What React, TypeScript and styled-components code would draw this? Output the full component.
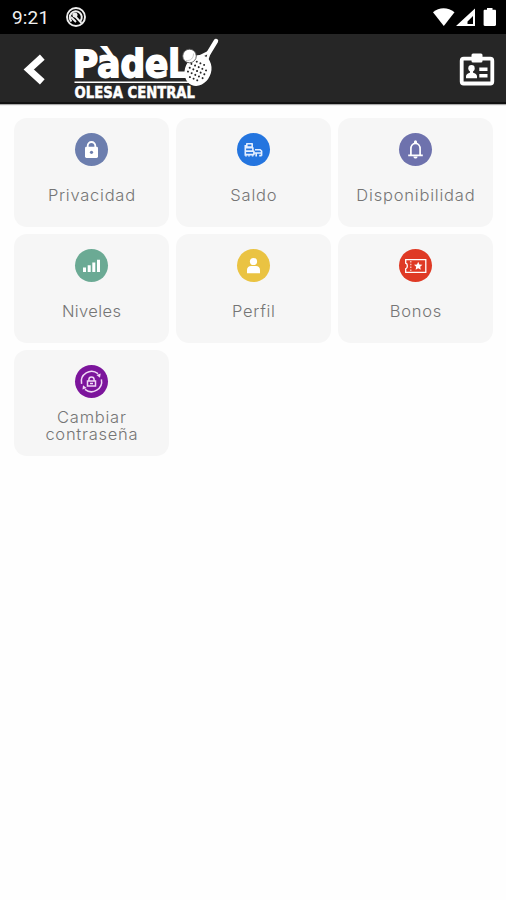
import React from 'react';
import styled, { createGlobalStyle } from 'styled-components';

const GlobalStyle = createGlobalStyle`
  * { box-sizing: border-box; }
  html, body { margin: 0; padding: 0; background: #fefefe; }
`;

const Screen = styled.div`
  width: 506px;
  height: 900px;
  display: flex;
  flex-direction: column;
  background: #fefefe;
  font-family: Inter, 'Liberation Sans', sans-serif;
  overflow: hidden;
`;

const StatusBar = styled.div`
  height: 34px;
  flex: none;
  display: flex;
  align-items: center;
  justify-content: space-between;
  padding: 0 9px 0 12px;
  background: #000;
`;

const StatusGroup = styled.div`
  display: flex;
  align-items: center;
`;

const Clock = styled.span`
  width: 53px;
  padding-top: 2px;
  color: #f0f0f0;
  font: 400 19px/34px Roboto, sans-serif;
  letter-spacing: 0.15px;
`;

const Header = styled.header`
  height: 70px;
  flex: none;
  display: flex;
  align-items: flex-start;
  justify-content: space-between;
  background: #262626;
  border-bottom: 2px solid #111;
  box-shadow: 0 1px 1px #aaa;
`;

const HeaderStart = styled.div`
  display: flex;
`;

const IconButton = styled.button`
  display: block;
  padding: 0;
  border: 0;
  background: none;
  line-height: 0;
`;

const BackButton = styled(IconButton)`
  width: 70px;
  height: 68px;
`;

const CardButton = styled(IconButton)`
  width: 46px;
  height: 68px;
  margin-right: 4px;
`;

const Grid = styled.main`
  display: grid;
  grid-template-columns: repeat(3, 155px);
  grid-template-rows: 109px 109px 106px;
  gap: 7px;
  padding: 14px 0 0 14px;
`;

const Card = styled.button`
  display: flex;
  flex-direction: column;
  align-items: center;
  padding: 15px 0 0;
  border: 0;
  border-radius: 13px;
  background: #f6f6f6;
  font-family: inherit;
`;

const Disc = styled.span<{ $color: string }>`
  width: 33px;
  height: 33px;
  flex: none;
  border-radius: 50%;
  background: ${(p) => p.$color};
  line-height: 0;
`;

const Label = styled.span<{ $spacing: number; $double?: boolean }>`
  margin-top: ${(p) => (p.$double ? '11px' : '21px')};
  padding-left: ${(p) => p.$spacing}px;
  color: #757575;
  font-size: 16.5px;
  font-weight: 300;
  line-height: 17px;
  letter-spacing: ${(p) => p.$spacing}px;
  text-align: center;
  white-space: pre-line;
`;

const Glyph = ({ children }: { children: React.ReactNode }) => (
  <svg width="33" height="33" viewBox="0 0 33 33" fill="none">{children}</svg>
);

const icons = {
  lock: (
    <Glyph>
      <path d="M12.700 15v-2.200a3.800 3.800 0 0 1 7.600 0V15" stroke="#fff" strokeWidth="1.800" />
      <rect x="10" y="13.800" width="13" height="11.200" rx="1.400" fill="#fff" />
      <circle cx="16.500" cy="19.300" r="1.600" fill="#6c7eae" />
    </Glyph>
  ),
  money: (
    <Glyph>
      <g stroke="#e5efff" strokeWidth="1.600" strokeLinejoin="round">
        <path d="M8.300 12v10.800M9.800 10.800h5.400v3.200H9.800zM8.300 14.800h7.600v3.200H8.300M8.300 18.200h8.600v3.400H8.300M18 16.800h5.200l1.400 1.200v4.800M17 20h7.600" />
        <path d="M9 22.200v1.400M12 22.200v1.400M15.600 22.200v1.400M19.200 20v3.600M22.200 22.600h2.400" />
      </g>
    </Glyph>
  ),
  bell: (
    <Glyph>
      <path d="M11.900 22v-6.200c0-3 1.800-5.500 4.600-5.500s4.600 2.500 4.600 5.500V22M9.200 22.300h14.600" stroke="#fff" strokeWidth="1.700" />
      <path d="M15 8.800a1.500 1.500 0 0 1 3 0v1.500h-3zM14.400 23.500h4.200c-.2 2.800-4 2.800-4.200 0z" fill="#fff" />
    </Glyph>
  ),
  bars: (
    <Glyph>
      <path d="M8 18.500h3v4.400H8zM12.700 16.200h3v6.700h-3zM17.300 13.400h3v9.500h-3zM22 10.700h3v12.200h-3z" fill="#fff" />
    </Glyph>
  ),
  person: (
    <Glyph>
      <circle cx="16.500" cy="12.500" r="3.600" fill="#fff" />
      <path d="M10 24.300v-3.500c0-2.700 1.800-3.900 4-3.900h5c2.200 0 4 1.200 4 3.900v3.500z" fill="#fff" />
    </Glyph>
  ),
  ticket: (
    <Glyph>
      <path d="M6.700 10.700h20.100v12.600H6.700v-3.500c2.200-.5 2.200-5.100 0-5.600z" stroke="#fff" strokeWidth="1.300" />
      <path d="M11.800 12v10.700" stroke="#ffd0c8" strokeWidth="1.200" strokeDasharray="1.500 1.300" />
      <path d="m19.200 12.800 1.200 2.700 3 .3-2.200 2 .6 3-2.600-1.600-2.600 1.600.6-3-2.200-2 3-.3z" fill="#fff" />
    </Glyph>
  ),
  reset: (
    <Glyph>
      <g stroke="#f0d9f5" strokeWidth="1.500">
        <path d="M6.600 18.800A10.200 10.200 0 0 1 23 8.700M26.400 14.400A10.200 10.200 0 0 1 10 24.400" />
        <path d="M13.900 16v-1.500a2.600 2.600 0 0 1 5.200 0V16M12.500 16h8v5h-8zM15 18.600h3" />
      </g>
      <path d="m21.400 10 4.300-1.500-.7 4.200zM11.600 23l-4.100 1.500.5-4.200z" fill="#f0d9f5" />
    </Glyph>
  ),
};

const items: { icon: keyof typeof icons; color: string; label: string; spacing: number; double?: boolean }[] = [
  { icon: 'lock', color: '#6c7eae', label: 'Privacidad', spacing: 0.75 },
  { icon: 'money', color: '#2475df', label: 'Saldo', spacing: 0.8 },
  { icon: 'bell', color: '#6e72ad', label: 'Disponibilidad', spacing: 0.8 },
  { icon: 'bars', color: '#6baa94', label: 'Niveles', spacing: 0.4 },
  { icon: 'person', color: '#eac342', label: 'Perfil', spacing: 0.7 },
  { icon: 'ticket', color: '#df3a25', label: 'Bonos', spacing: 0.8 },
  { icon: 'reset', color: '#7c159c', label: 'Cambiar\ncontraseña', spacing: 0.75, double: true },
];

const dots = [-2, -1, 0, 1, 2].flatMap((row) =>
  [-2, -1, 0, 1, 2]
    .filter((col) => Math.abs(row) + Math.abs(col) < 4)
    .map((col) => ({ row, col })),
);

const Logo = () => (
  <svg width="152" height="68" viewBox="70 34 152 68" fill="none">
    <text x="73" y="77" fill="#fff" stroke="#fff" strokeWidth="1.800" strokeLinejoin="miter" fontFamily="'DejaVu Sans', sans-serif" fontWeight="700" fontSize="36.500" textLength="107" lengthAdjust="spacingAndGlyphs">Pàdel</text>
    <path d="M174 71.500h13v6.400h-10z" fill="#fff" />
    <text x="74.500" y="98.200" fill="#fff" stroke="#fff" strokeWidth="0.500" fontFamily="'DejaVu Sans', sans-serif" fontWeight="700" fontSize="15" textLength="120.500" lengthAdjust="spacingAndGlyphs">OLESA CENTRAL</text>
    <path d="M74.500 82.300H190" stroke="#fff" strokeWidth="1.500" />
    <path d="m216 41-7 11.500" stroke="#fff" strokeWidth="4.400" strokeLinecap="round" />
    <path d="m210 51-3.500 10M209 52l-10 5" stroke="#fff" strokeWidth="2.800" />
    <ellipse cx="198" cy="70.500" rx="13" ry="15.800" transform="rotate(24 198 70.500)" fill="#fff" />
    <g fill="#262626" transform="translate(197 71) rotate(24)">
      {dots.map(({ row, col }) => (
        <circle key={`${row}/${col}`} cx={col * 4} cy={row * 4.2} r="1" />
      ))}
    </g>
    <circle cx="189.500" cy="56" r="6.800" fill="#fff" stroke="#555" strokeWidth="0.900" />
    <path d="M186 60.500c5 .5 7.500-2.500 7.500-7" stroke="#bbb" strokeWidth="0.800" />
  </svg>
);

export default function App() {
  return (
    <>
      <GlobalStyle />
      <Screen>
        <StatusBar>
          <StatusGroup>
            <Clock>9:21</Clock>
            <svg width="22" height="22" viewBox="0 0 22 22" fill="none">
              <circle cx="11" cy="11" r="9" stroke="#eee" strokeWidth="1.900" />
              <path d="M6.500 15.500a6 6 0 1 1 9-.500" stroke="#eee" strokeWidth="2" />
              <path d="m8 8 8.500 9M6 11l5 5" stroke="#eee" strokeWidth="1.900" />
              <circle cx="10" cy="9" r="2.500" fill="#eee" />
            </svg>
          </StatusGroup>
          <svg width="65" height="22" viewBox="0 0 65 22" fill="#fff">
            <path d="M1 6.200C7 1 16 1 22.500 6.200L11.800 20z" />
            <path fillRule="evenodd" d="M43 2.500V20H24zM41 10v8h-5.500v-2.500z" />
            <path d="M55 2h5.500v1.800h2.400c.7 0 1.100.5 1.100 1.100v13.900c0 .7-.5 1.200-1.200 1.200h-10c-.7 0-1.200-.5-1.200-1.200V4.900c0-.6.500-1.100 1.100-1.100H55z" />
          </svg>
        </StatusBar>
        <Header>
          <HeaderStart>
            <BackButton aria-label="Atrás">
              <svg width="70" height="68" viewBox="0 34 70 68" fill="none">
                <path d="M42.300 57.200 28.800 69.500l13.500 12.300" stroke="#fff" strokeWidth="7" />
              </svg>
            </BackButton>
            <Logo />
          </HeaderStart>
          <CardButton aria-label="Carnet">
            <svg width="46" height="68" viewBox="456 34 46 68" fill="none">
              <rect x="461.700" y="58.700" width="30.600" height="24.800" rx="2" stroke="#fff" strokeWidth="3.800" />
              <rect x="471.500" y="53.500" width="11" height="9" rx="1.500" fill="#fff" />
              <circle cx="471.500" cy="68.300" r="3.200" fill="#fff" />
              <path d="M466 78.200v-1.900c0-2 1.900-2.900 3.900-3.500v-3h3.200v3c2 .6 3.900 1.500 3.900 3.500v1.900zM479.300 67.500h8.200v3.600h-8.200zM479.300 74h8.200v3.600h-8.200z" fill="#fff" />
            </svg>
          </CardButton>
        </Header>
        <Grid>
          {items.map((it) => (
            <Card key={it.label}>
              <Disc $color={it.color}>{icons[it.icon]}</Disc>
              <Label $spacing={it.spacing} $double={it.double}>{it.label}</Label>
            </Card>
          ))}
        </Grid>
      </Screen>
    </>
  );
}
